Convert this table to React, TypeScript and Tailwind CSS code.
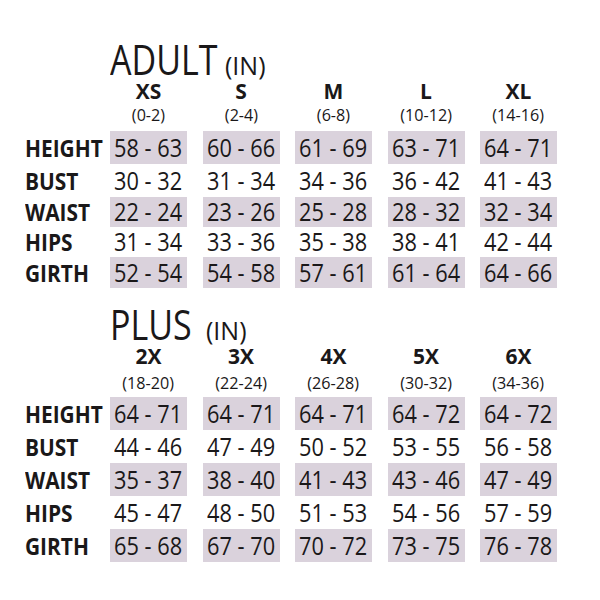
import React from "react";

type Section = {
  title: string;
  sizes: [string, string][];
  rows: [string, string[]][];
};

const adult: Section = {
  title: "ADULT",
  sizes: [
    ["XS", "(0-2)"],
    ["S", "(2-4)"],
    ["M", "(6-8)"],
    ["L", "(10-12)"],
    ["XL", "(14-16)"],
  ],
  rows: [
    ["HEIGHT", ["58 - 63", "60 - 66", "61 - 69", "63 - 71", "64 - 71"]],
    ["BUST", ["30 - 32", "31 - 34", "34 - 36", "36 - 42", "41 - 43"]],
    ["WAIST", ["22 - 24", "23 - 26", "25 - 28", "28 - 32", "32 - 34"]],
    ["HIPS", ["31 - 34", "33 - 36", "35 - 38", "38 - 41", "42 - 44"]],
    ["GIRTH", ["52 - 54", "54 - 58", "57 - 61", "61 - 64", "64 - 66"]],
  ],
};

const plus: Section = {
  title: "PLUS",
  sizes: [
    ["2X", "(18-20)"],
    ["3X", "(22-24)"],
    ["4X", "(26-28)"],
    ["5X", "(30-32)"],
    ["6X", "(34-36)"],
  ],
  rows: [
    ["HEIGHT", ["64 - 71", "64 - 71", "64 - 71", "64 - 72", "64 - 72"]],
    ["BUST", ["44 - 46", "47 - 49", "50 - 52", "53 - 55", "56 - 58"]],
    ["WAIST", ["35 - 37", "38 - 40", "41 - 43", "43 - 46", "47 - 49"]],
    ["HIPS", ["45 - 47", "48 - 50", "51 - 53", "54 - 56", "57 - 59"]],
    ["GIRTH", ["65 - 68", "67 - 70", "70 - 72", "73 - 75", "76 - 78"]],
  ],
};

// row heights differ a little between the two tables in the picture
const adultRowH = ["h-[33px]", "h-[33px]", "h-[30px]", "h-[30px]", "h-[31px]"];
const plusRowH = ["h-[33px]", "h-[33px]", "h-[33px]", "h-[33px]", "h-[33px]"];

function SizeTable({
  data,
  rowH,
  sizeRow,
  rangeRow,
  titleW,
}: {
  data: Section;
  rowH: string[];
  sizeRow: string;
  rangeRow: string;
  titleW: string;
}) {
  return (
    <div className="grid grid-cols-[69.5px_repeat(5,77px)] gap-x-[15.5px] pl-[25px]">
      {/* title */}
      <div className="col-start-2 col-span-5 flex h-[44px] items-baseline whitespace-nowrap leading-[44px]">
        <span className={`${titleW} text-[42px]`}>
          <span className="inline-block origin-left scale-x-[0.81]">{data.title}</span>
        </span>
        <span className="ml-[7px] text-[25px]">(IN)</span>
      </div>

      {/* size names */}
      <div className={sizeRow} />
      {data.sizes.map(([s]) => (
        <div key={s} className={`${sizeRow} whitespace-nowrap text-center text-[21px] font-bold leading-[21px]`}>
          {s}
        </div>
      ))}

      {/* size ranges */}
      <div className={rangeRow} />
      {data.sizes.map(([s, r]) => (
        <div key={s + r} className={`${rangeRow} whitespace-nowrap text-center text-[17px] leading-[17px]`}>
          <span className="inline-block scale-x-[0.95]">{r}</span>
        </div>
      ))}

      {/* measurements */}
      {data.rows.map(([label, vals], i) => (
        <React.Fragment key={label}>
          <div className={`${rowH[i]} flex items-center whitespace-nowrap text-[24px] font-bold`}>
            <span className="inline-block origin-left scale-x-[0.87]">{label}</span>
          </div>
          {vals.map((v, j) => (
            <div
              key={j}
              className={`${rowH[i]} flex items-center justify-center whitespace-nowrap text-[25px] font-medium ${
                i % 2 === 0 ? "bg-[#dad2dc]" : ""
              }`}
            >
              <span className="inline-block scale-x-[0.87]">{v}</span>
            </div>
          ))}
        </React.Fragment>
      ))}
    </div>
  );
}

export default function App() {
  return (
    <div
      className="h-[600px] w-[600px] overflow-hidden bg-white pt-[37px] text-[#1a1819]"
      style={{ fontFamily: "'Open Sans', 'Liberation Sans', sans-serif" }}
    >
      <SizeTable data={adult} rowH={adultRowH} sizeRow="h-[25px]" rangeRow="h-[25px]" titleW="w-[108px]" />
      <div className="h-[14px]" />
      <SizeTable data={plus} rowH={plusRowH} sizeRow="h-[28px]" rangeRow="h-[23px]" titleW="w-[89px]" />
    </div>
  );
}
